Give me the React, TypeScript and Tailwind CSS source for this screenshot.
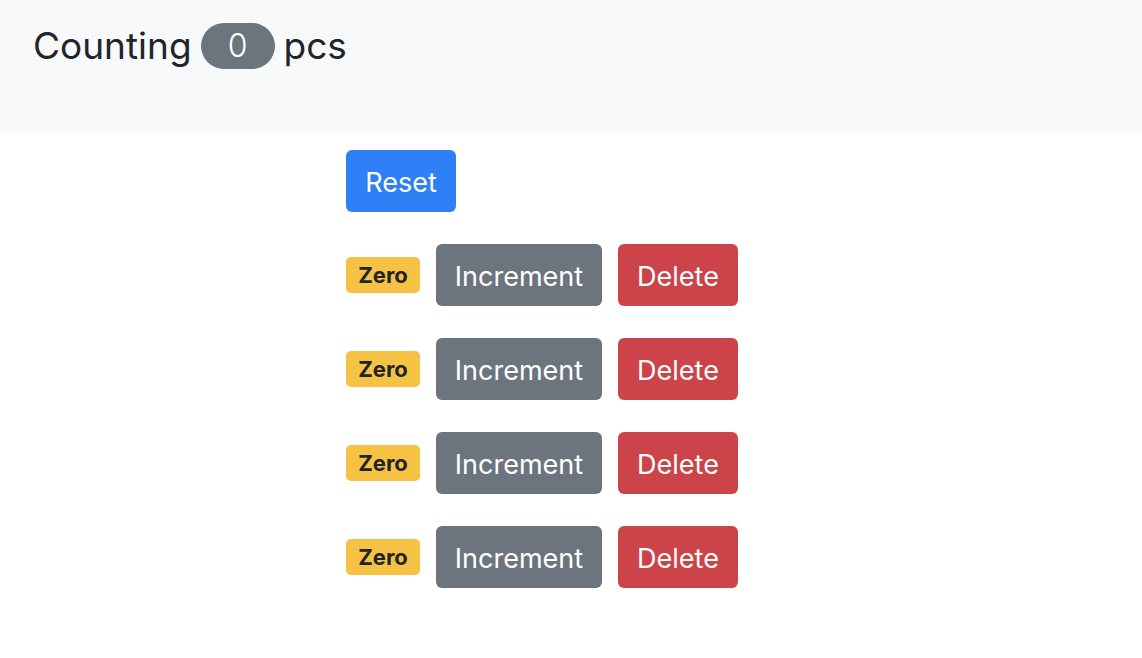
const rows = [0, 1, 2, 3];

export default function App() {
  return (
    <div className="min-h-[658px] bg-white text-[#212529]" style={{ fontFamily: "Inter, 'Liberation Sans', sans-serif" }}>
      <div className="h-[133px] bg-[#f8f9fa] pl-[33px] pt-[22px]">
        <h4 className="flex items-center text-[37px] leading-[47px] font-normal">
          Counting
          <span className="mx-[9px] inline-flex h-[46px] w-[74px] items-center justify-center rounded-full bg-[#6c757d] text-[32px] font-light text-white">
            0
          </span>
          pcs
        </h4>
      </div>
      <div className="flex flex-col gap-[32px] pl-[346px] pt-[17px]">
        <div>
          <button className="h-[62px] w-[110px] rounded-[6px] bg-[#2f7ff7] pt-[4px] text-[27px] text-white">Reset</button>
        </div>
        {rows.map((r) => (
          <div key={r} className="flex items-center gap-[16px]">
            <span className="inline-flex h-[36px] w-[74px] items-center justify-center rounded-[5px] bg-[#f6c244] pt-[1px] text-[22px] font-bold text-[#212529]">
              Zero
            </span>
            <button className="h-[62px] w-[166px] rounded-[6px] bg-[#6c757d] pt-[4px] text-[27px] text-white">Increment</button>
            <button className="h-[62px] w-[120px] rounded-[6px] bg-[#cc434a] pt-[4px] text-[27px] text-white">Delete</button>
          </div>
        ))}
      </div>
    </div>
  );
}
